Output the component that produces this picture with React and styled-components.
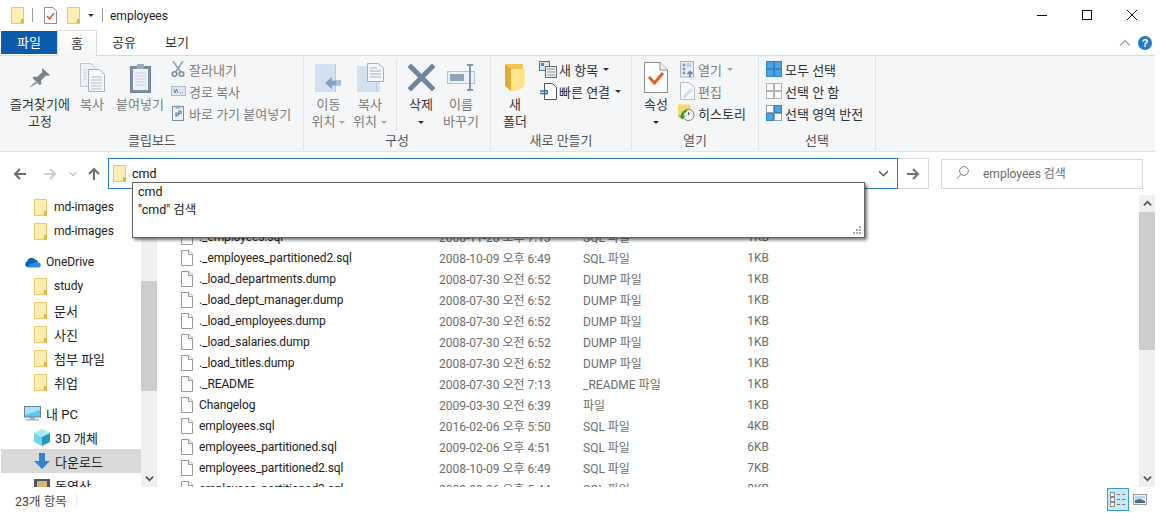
import React from "react";
import styled, { createGlobalStyle } from "styled-components";

const Global = createGlobalStyle`
  html, body { margin: 0; padding: 0; background: #fff; }
  body { font-family: Roboto, "Noto Sans CJK KR", sans-serif; font-size: 12px; color: #222; }
  * { box-sizing: border-box; }
`;

const Page = styled.div`
  position: relative; width: 1155px; height: 513px; overflow: hidden; background: #fff;
  display: flex; flex-direction: column;
`;
const TitleBar = styled.div`height: 30px; display: flex; align-items: center; padding-left: 11px; flex: none;`;
const QuickSep = styled.span`width: 1px; height: 14px; background: #9a9a9a; margin: 0 ${p => p.$r}px 0 ${p => p.$l}px;`;
const QuickGap = styled.span`width: 10px; flex: none;`;
const TitleText = styled.span`font-size: 12px; color: #222; margin-left: 7px; padding-top: 2px;`;
const WinControls = styled.div`margin-left: auto; display: flex; align-items: center; margin-right: 18px; gap: 35px;`;
const TabRow = styled.div`height: 25px; display: flex; align-items: stretch; padding-left: 1px; flex: none; position: relative; z-index: 1; font-size: 13px;`;
const FileTab = styled.div`
  width: 56px; height: 23px; margin-top: 1px; background: #0a5bab; color: #fff; display: flex; align-items: center; justify-content: center; padding-bottom: 2px;
`;
const Tab = styled.div`
  width: ${p => p.$w}px; display: flex; align-items: center; justify-content: center; color: #333;
  ${p => p.$active ? "border:1px solid #dadbdc;border-bottom:none;background:linear-gradient(#fff,#f5f6f7);height:26px;padding-bottom:3px;" : "padding-bottom: 3px;"}
`;
const HelpArea = styled.div`margin-left: auto; display: flex; align-items: center; gap: 7px; margin-right: 3px;`;

const Ribbon = styled.div`
  height: 97px; flex: none; background: #f5f6f7; border-top: 1px solid #dadbdc; border-bottom: 1px solid #e4e4e4; display: flex; padding-left: 1px;
  font-size: 13px;
`;
const Group = styled.div`
  width: ${p => p.$w}px; flex: none; border-right: 1px solid #e2e3e4; display: flex; flex-direction: column; margin-bottom: 1px;
`;
const GroupBody = styled.div`flex: none; height: 76px; display: flex; padding: 3px 0 0 ${p => p.$pl || 0}px;`;
const GroupLabel = styled.div`text-align: center; color: #555; line-height: 18px; height: 18px;`;
const Large = styled.div`
  width: ${p => p.$w}px; flex: none; display: flex; flex-direction: column; align-items: center; text-align: center;
  color: ${p => p.$off ? "#7c7c7c" : "#333"}; white-space: nowrap;
`;
const LargeIcon = styled.div`height: 37px; display: flex; align-items: center; justify-content: center; flex: none;`;
const LargeText = styled.div`line-height: 17px;`;
const SmallCol = styled.div`display: flex; flex-direction: column; margin-left: ${p => p.$ml || 0}px; margin-top: -1px;`;
const Small = styled.div`
  height: 22px; display: flex; align-items: center; gap: 1px; white-space: nowrap; color: ${p => p.$off ? "#7c7c7c" : "#333"};
`;
const SmallIcon = styled.span`width: 18px; height: 18px; display: flex; align-items: center; justify-content: center; flex: none; margin-right: 1px;`;
const Caret = styled.span`
  display: inline-block; width: 0; height: 0; border-left: 3px solid transparent; border-right: 3px solid transparent;
  border-top: 3px solid ${p => p.$off ? "#a6a6a6" : "#333"}; margin-left: ${p => p.$ml ?? 4}px; vertical-align: middle;
`;
const VSep = styled.span`width: 1px; height: 72px; background: #e2e3e4; margin: 0 4px 0 5px; flex: none;`;

const NavBar = styled.div`height: 43px; flex: none; display: flex; align-items: center; position: relative;`;
const NavButtons = styled.div`width: 108px; display: flex; align-items: center; padding-left: 13px; flex: none;`;
const NavIcon = styled.span`display: flex; width: ${p => p.$w}px; justify-content: center; margin-left: ${p => p.$ml || 0}px;`;
const Address = styled.div`
  width: 790px; height: 31px; border: 1px solid #2b7cb3; display: flex; align-items: center; padding-left: 4px; background: #fff; flex: none;
`;
const AddressText = styled.span`margin-left: 6px; color: #111; font-size: 12.5px;`;
const AddressChevron = styled.span`margin-left: auto; margin-right: 8px; display: flex;`;
const GoButton = styled.div`
  width: 31px; height: 31px; border: 1px solid #d9d9d9; border-left: none; display: flex; align-items: center; justify-content: center; flex: none;
`;
const SearchBox = styled.div`
  width: 202px; height: 30px; margin-left: 12px; border: 1px solid #d9d9d9; display: flex; align-items: center; padding: 0 0 2px 14px; gap: 14px; color: #6d6d6d; flex: none;
`;

const Popup = styled.div`
  position: absolute; left: 132px; top: 182px; width: 733px; height: 56px; background: #fff; border: 1px solid #646464;
  box-shadow: 2px 2px 3px rgba(0,0,0,.55); padding: 0 5px; z-index: 5; line-height: 18px; color: #222; font-size: 12.5px;
`;
const PopupGrip = styled.span`position: absolute; right: 2px; bottom: 2px; display: flex;`;

const Main = styled.div`flex: none; height: 292px; display: flex; overflow: hidden;`;
const Tree = styled.div`width: 141px; flex: none; padding-left: 1px; overflow: hidden;`;
const TreeRow = styled.div`
  height: 24px; display: flex; align-items: center; gap: ${p => p.$gap || 7}px; padding-left: ${p => p.$pl}px; color: #222;
  margin-top: ${p => p.$mt || 0}px; white-space: nowrap; font-size: ${p => p.$ko ? 13 : 12}px;
  ${p => p.$sel ? "background:#d9d9d9;" : ""}
`;
const ScrollBar = styled.div`
  width: 16px; flex: none; background: #f0f0f0; display: flex; flex-direction: column; align-items: center;
`;
const ScrollBtn = styled.span`height: 17px; flex: none; display: flex; align-items: center; justify-content: center;`;
const ScrollSpace = styled.span`flex: ${p => p.$grow || 1} 0 0;`;
const Thumb = styled.span`width: 16px; height: ${p => p.$h}px; background: #cdcdcd; flex: none;`;
const List = styled.div`flex: 1; overflow: hidden; padding: 31px 0 0 24px;`;
const Row = styled.div`height: 21px; display: grid; grid-template-columns: 18px 240px 144px 100px 86px; align-items: center; white-space: nowrap;`;
const RowIcon = styled.span`display: flex; align-items: center;`;
const Name = styled.span`color: #222; letter-spacing: -0.1px;`;
const Meta = styled.span`color: #6d6d6d;`;
const Size = styled(Meta)`text-align: right;`;

const Status = styled.div`height: 26px; flex: none; display: flex; align-items: center; padding-left: 15px; color: #444; position: relative; font-size: 12.5px;`;
const StatusSep = styled.span`width: 1px; height: 14px; background: #ededed; margin-left: 9px;`;
const ViewSwitch = styled.div`margin-left: auto; display: flex; align-items: center; gap: 4px; margin-right: 8px; margin-top: -2px;`;
const ViewActive = styled.div`
  width: 22px; height: 23px; background: #cce8fa; border: 1px solid #3b9dc9; display: flex; align-items: center; justify-content: center;
`;

/* ---------- drawings ---------- */
const Folder = ({ w = 13, h = 17 }) => (
  <svg width={w} height={h} viewBox="0 0 13 17">
    <path d="M0.5 0.5H12.5V16.5H0.5Z" fill="#fde38c" stroke="#ecc964" />
    <path d="M1 1H12V9C12 12 9 15 6 16H1Z" fill="#ffeeb3" />
    <path d="M10 12H12.5V16.5H10Z" fill="#e5b63f" />
  </svg>
);
const FileDoc = () => (
  <svg width="12" height="16" viewBox="0 0 12 16">
    <path d="M.5.5H8L11.5 4V15.5H.5Z" fill="#fff" stroke="#9a9a9a" />
    <path d="M7.5.5V4.5H11.5" fill="#f5f5f5" stroke="#9a9a9a" />
  </svg>
);
const CheckDoc = () => (
  <svg width="13" height="17" viewBox="0 0 13 17">
    <path d="M.5.5H9L12.5 4V16.5H.5Z" fill="#fff" stroke="#8e8e8e" />
    <path d="M3 9L5.5 12L10 6" fill="none" stroke="#e0582a" strokeWidth="1.5" />
  </svg>
);
const Pin = () => (
  <svg width="24" height="22" viewBox="0 0 24 22">
    <path d="M14 1L22 8L20 9L18 8.5L13 13.5L13.5 17L11.5 18L4.5 11L6 9.5L9 10L14.5 5L14 3Z" fill="#7e8186" />
    <path d="M7.5 14.5L1 21L9 16.5Z" fill="#8d9095" />
  </svg>
);
const CopyDocs = () => (
  <svg width="25" height="29" viewBox="0 0 25 29">
    <path d="M.5.5H11L16 5.5V23.5H.5Z" fill="#eef1f7" stroke="#bfc6d2" />
    <path d="M8.5 6.5H19L24.5 11.5V28.5H8.5Z" fill="#f7f8fb" stroke="#a9b1bf" />
    <path d="M11 14H22M11 17H22M11 20H22M11 23H22M11 26H22" stroke="#b4bac6" />
    <path d="M3 7H7M3 10H7M3 13H7M3 16H7" stroke="#cbd0da" />
  </svg>
);
const Clipboard = () => (
  <svg width="21" height="30" viewBox="0 0 21 30">
    <rect x=".5" y="3.5" width="20" height="26" fill="#7d90a8" stroke="#6f8199" />
    <rect x="3" y="6" width="15" height="21" fill="#eff0f6" />
    <path d="M5 10H16M5 13H16M5 16H16M5 19H16M5 22H16" stroke="#cdd2df" />
    <rect x="7" y="1" width="7" height="5" fill="#9aa9bc" />
  </svg>
);
const Scissors = () => (
  <svg width="14" height="16" viewBox="0 0 14 16" fill="none">
    <path d="M2 0L9.5 11M12 0L4.5 11" stroke="#9aa0a8" strokeWidth="1.6" />
    <circle cx="3.5" cy="13" r="2.3" stroke="#7d8fa6" strokeWidth="1.6" />
    <circle cx="10.5" cy="13" r="2.3" stroke="#7d8fa6" strokeWidth="1.6" />
  </svg>
);
const PathIcon = () => (
  <svg width="15" height="10" viewBox="0 0 15 10">
    <rect x=".5" y=".5" width="14" height="9" fill="#dde6f2" stroke="#a9bdd6" />
    <path d="M2.5 3L4 7L5.5 3L7 7M9 7H10M11 7H12" stroke="#5a6a80" strokeWidth=".8" fill="none" />
  </svg>
);
const Shortcut = () => (
  <svg width="12" height="16" viewBox="0 0 12 16">
    <rect x=".5" y="1.5" width="11" height="14" fill="#eef2f7" stroke="#7d90a8" />
    <rect x="3.5" y=".5" width="5" height="3" fill="#9aa9bc" />
    <path d="M4 12V8H8M8 8L5 11M6 6H9V9" stroke="#5f7590" strokeWidth="1.1" fill="none" />
  </svg>
);
const MoveTo = () => (
  <svg width="27" height="28" viewBox="0 0 27 28">
    <rect x="0" y="0" width="21" height="28" fill="#d3e0f0" />
    <rect x="20" y="0" width="1" height="28" fill="#b9cbe0" />
    <path d="M10 19L17 13V16.5H26V21.5H17V25Z" fill="#85a3c4" />
    <rect x="21" y="16.5" width="5" height="5" fill="#a9bed6" />
  </svg>
);
const CopyTo = () => (
  <svg width="27" height="30" viewBox="0 0 27 30">
    <rect x="0" y="3" width="23" height="26" fill="#d3e0f0" />
    <rect x="19" y="3" width="1" height="26" fill="#b9cbe0" />
    <path d="M10.5.5H21L26.5 5V18.5H10.5Z" fill="#f4f6fa" stroke="#a6afbe" />
    <path d="M13 5H20M13 8H24M13 11H24M13 14H24" stroke="#a6afbe" />
  </svg>
);
const Cross = () => (
  <svg width="27" height="27" viewBox="0 0 27 27">
    <path d="M3 3L24 24M24 3L3 24" stroke="#71869f" strokeWidth="5" strokeLinecap="square" />
  </svg>
);
const Rename = () => (
  <svg width="29" height="27" viewBox="0 0 29 27" fill="none">
    <rect x=".5" y="7.5" width="27" height="12" fill="#eef2f8" stroke="#b4c3d6" />
    <rect x="3" y="10" width="14" height="7" fill="#8fa3bb" />
    <path d="M20 1H26M20 26H26M23 1V26" stroke="#8396ae" strokeWidth="2" />
  </svg>
);
const NewFolder = () => (
  <svg width="21" height="29" viewBox="0 0 21 29">
    <path d="M1 1H18V24H6Z" fill="#f0c755" />
    <path d="M0 1L6 6V28L0 23Z" fill="#e0ab3a" />
    <path d="M6 6H20V22C18 26 12 28 6 28Z" fill="#ffe58e" />
  </svg>
);
const NewItem = () => (
  <svg width="18" height="17" viewBox="0 0 18 17">
    <rect x=".5" y=".5" width="10" height="9" fill="#dbe6f2" stroke="#52718f" />
    <rect x="2" y="2" width="3" height="3" fill="#3d87c8" />
    <rect x="6.5" y="5.5" width="11" height="11" fill="#f3f3f3" stroke="#6a6a6a" />
    <path d="M8 8H16M8 11H16M8 14H16" stroke="#8a8a8a" />
  </svg>
);
const QuickLink = () => (
  <svg width="17" height="17" viewBox="0 0 17 17">
    <path d="M4.5.5H12L16.5 4V16.5H4.5Z" fill="#fff" stroke="#555" />
    <path d="M0 8H8M0 10.5H8" stroke="#2479bd" strokeWidth="1.3" />
    <path d="M4 6L8 9.2L4 12.5" fill="none" stroke="#2479bd" />
  </svg>
);
const PropertyDoc = () => (
  <svg width="24" height="31" viewBox="0 0 24 31">
    <path d="M.5.5H16L23.5 8V30.5H.5Z" fill="#fff" stroke="#8d8d8d" />
    <path d="M16 .5V8H23.5" fill="#f0f0f0" stroke="#8d8d8d" />
    <path d="M5 15L10.5 21L19 11" fill="none" stroke="#e0602b" strokeWidth="3" />
  </svg>
);
const OpenIcon = () => (
  <svg width="15" height="17" viewBox="0 0 15 17">
    <rect x=".5" y=".5" width="13" height="15.5" fill="#e7ecf3" stroke="#a8b4c3" />
    <path d="M3 3H5V5H3ZM3 7H5V9H3ZM3 11H5V13H3ZM7 3H11M7 5H11" fill="#8ea0b6" stroke="#8ea0b6" strokeWidth=".8" />
    <path d="M10 16V11M7.5 13L10 10.5L12.5 13" stroke="#5f86b5" strokeWidth="1.6" fill="none" />
  </svg>
);
const EditIcon = () => (
  <svg width="15" height="18" viewBox="0 0 15 18">
    <path d="M.5.5H9L14.5 5V17.5H.5Z" fill="#f7f9fc" stroke="#b3bdca" />
    <path d="M3 14L11 6L13 8L5 16H3Z" fill="#d2deec" />
  </svg>
);
const HistoryIcon = () => (
  <svg width="19" height="18" viewBox="0 0 19 18">
    <path d="M0 0H13V14H0Z" fill="#f8d56f" />
    <circle cx="11" cy="11" r="6" fill="#f4f4f4" stroke="#6f7f6f" />
    <path d="M11 8V11L13 9" stroke="#555" fill="none" />
    <path d="M3 12A6 6 0 0 1 10 6L9 8A4 4 0 0 0 6 12L8 12L4.5 16L1 12Z" fill="#3c9b2f" />
  </svg>
);
const SelectGrid = ({ mode }) => {
  const c = (i) => {
    if (mode === "all") return { f: "#4da3e0", s: "#2f86c8" };
    if (mode === "none") return { f: "#fff", s: "#b4b4b4" };
    return i === 1 || i === 2 ? { f: "#4da3e0", s: "#2f86c8" } : { f: "#fff", s: "#8aa4bc" };
  };
  const pos = [[.5, .5], [8.5, .5], [.5, 8.5], [8.5, 8.5]];
  return (
    <svg width="16" height="16" viewBox="0 0 16 16">
      {pos.map(([x, y], i) => <rect key={i} x={x} y={y} width="7" height="7" fill={c(i).f} stroke={c(i).s} />)}
    </svg>
  );
};
const Arrow = ({ dir, color }) => (
  <svg width="14" height="14" viewBox="0 0 14 14" fill="none" stroke={color} strokeWidth="2">
    {dir === "left" && <path d="M13 7H2M7 2L2 7L7 12" />}
    {dir === "right" && <path d="M1 7H12M7 2L12 7L7 12" />}
    {dir === "up" && <path d="M7 13V2M2 7L7 2L12 7" />}
  </svg>
);
const Chevron = ({ up, size = 9, color = "#555", sw = 1.2 }) => (
  <svg width={size} height={size} viewBox="0 0 10 10" fill="none" stroke={color} strokeWidth={sw}>
    <path d={up ? "M1 7L5 3L9 7" : "M1 3L5 7L9 3"} />
  </svg>
);
const Magnifier = () => (
  <svg width="13" height="13" viewBox="0 0 13 13" fill="none" stroke="#858585">
    <circle cx="8" cy="5" r="4.4" />
    <path d="M5 8.5L.7 12.6" />
  </svg>
);
const Grip = () => (
  <svg width="9" height="9" viewBox="0 0 9 9" fill="#a8a8a8">
    <path d="M6 0h2v2H6zM3 3h2v2H3zM6 3h2v2H6zM0 6h2v2H0zM3 6h2v2H3zM6 6h2v2H6z" />
  </svg>
);
const Cloud = () => (
  <svg width="17" height="12" viewBox="0 0 17 12">
    <path d="M3 11A3 3 0 0 1 3 5.5A4.5 4.5 0 0 1 11 3.5A3.5 3.5 0 0 1 14 7L7 11Z" fill="#0a64b4" />
    <path d="M3 11.5H14.5A2.5 2.5 0 0 0 14 6.5C12 6 10 6.5 8 8C6 7.5 4 9 3 11.5Z" fill="#2a8ee0" />
  </svg>
);
const Monitor = () => (
  <svg width="17" height="15" viewBox="0 0 17 15">
    <rect x=".5" y=".5" width="16" height="10.5" fill="#5cc3f2" stroke="#6f8092" />
    <path d="M1 1H16V4L1 9Z" fill="#a7e2fb" />
    <rect x="6" y="11" width="5" height="2" fill="#9aa7b3" />
    <rect x="2" y="13" width="13" height="1.5" fill="#aab4bd" />
  </svg>
);
const Cube = () => (
  <svg width="16" height="17" viewBox="0 0 16 17">
    <path d="M8 0L16 4L8 8L0 4Z" fill="#a5ecf7" />
    <path d="M0 4L8 8V17L0 13Z" fill="#6fd6ea" />
    <path d="M16 4L8 8V17L16 13Z" fill="#1e9cc0" />
  </svg>
);
const DownArrow = () => (
  <svg width="16" height="16" viewBox="0 0 16 16">
    <path d="M5 0H11V8H16L8 16L0 8H5Z" fill="#2f84d6" />
  </svg>
);
const Film = () => (
  <svg width="16" height="12" viewBox="0 0 16 12">
    <rect width="16" height="12" fill="#4a5568" />
    <rect x="3" y="2" width="10" height="8" fill="#d6b66a" />
  </svg>
);
const Help = () => (
  <svg width="14" height="14" viewBox="0 0 14 14">
    <circle cx="7" cy="7" r="7" fill="#2a78c8" />
    <text x="7" y="11" textAnchor="middle" fontSize="11" fontWeight="700" fill="#fff" fontFamily="Liberation Sans, sans-serif">?</text>
  </svg>
);
const DetailsView = () => (
  <svg width="16" height="15" viewBox="0 0 16 15" fill="none">
    <rect x=".5" y=".5" width="4" height="4" fill="#fff" stroke="#8a8a8a" />
    <rect x=".5" y="5.5" width="4" height="4" fill="#fff" stroke="#8a8a8a" />
    <rect x=".5" y="10.5" width="4" height="4" fill="#fff" stroke="#8a8a8a" />
    <path d="M7 2.5H10M12 2.5H15M7 7.5H10M12 7.5H15M7 12.5H10M12 12.5H15" stroke="#777" />
  </svg>
);
const ThumbView = () => (
  <svg width="14" height="11" viewBox="0 0 14 11">
    <rect x=".5" y=".5" width="13" height="10" fill="#e8f0f5" stroke="#9a9a9a" />
    <rect x="2" y="2" width="10" height="3" fill="#bcd6e6" />
    <path d="M2 9V6L7 5L12 7V9Z" fill="#3f6f80" />
  </svg>
);

const files = [
  ["._employees.sql", "2008-11-28 오후 7:13", "SQL 파일", "1KB"],
  ["._employees_partitioned2.sql", "2008-10-09 오후 6:49", "SQL 파일", "1KB"],
  ["._load_departments.dump", "2008-07-30 오전 6:52", "DUMP 파일", "1KB"],
  ["._load_dept_manager.dump", "2008-07-30 오전 6:52", "DUMP 파일", "1KB"],
  ["._load_employees.dump", "2008-07-30 오전 6:52", "DUMP 파일", "1KB"],
  ["._load_salaries.dump", "2008-07-30 오전 6:52", "DUMP 파일", "1KB"],
  ["._load_titles.dump", "2008-07-30 오전 6:52", "DUMP 파일", "1KB"],
  ["._README", "2008-07-30 오전 7:13", "_README 파일", "1KB"],
  ["Changelog", "2009-03-30 오전 6:39", "파일", "1KB"],
  ["employees.sql", "2016-02-06 오후 5:50", "SQL 파일", "4KB"],
  ["employees_partitioned.sql", "2009-02-06 오후 4:51", "SQL 파일", "6KB"],
  ["employees_partitioned2.sql", "2008-10-09 오후 6:49", "SQL 파일", "7KB"],
  ["employees_partitioned3.sql", "2009-02-06 오후 5:44", "SQL 파일", "8KB"],
];

export default function App() {
  return (
    <Page>
      <Global />
      <TitleBar>
        <Folder />
        <QuickSep $l={8} $r={11} />
        <CheckDoc />
        <QuickGap />
        <Folder />
        <Caret $ml={8} />
        <QuickSep $l={8} $r={0} />
        <TitleText>employees</TitleText>
        <WinControls>
          <svg width="10" height="10" viewBox="0 0 10 10"><path d="M0 5.5H10" stroke="#111" /></svg>
          <svg width="10" height="10" viewBox="0 0 10 10"><rect x=".5" y=".5" width="9" height="9" fill="none" stroke="#111" /></svg>
          <svg width="10" height="10" viewBox="0 0 10 10"><path d="M0 0L10 10M10 0L0 10" stroke="#111" /></svg>
        </WinControls>
      </TitleBar>

      <TabRow>
        <FileTab>파일</FileTab>
        <Tab $w={40} $active>홈</Tab>
        <Tab $w={54}>공유</Tab>
        <Tab $w={52}>보기</Tab>
        <HelpArea>
          <Chevron up size={12} color="#a8a8a8" />
          <Help />
        </HelpArea>
      </TabRow>

      <Ribbon>
        <Group $w={303}>
          <GroupBody $pl={8}>
            <Large $w={62}><LargeIcon><Pin /></LargeIcon><LargeText>즐겨찾기에<br />고정</LargeText></Large>
            <Large $w={42} $off><LargeIcon><CopyDocs /></LargeIcon><LargeText>복사</LargeText></Large>
            <Large $w={54} $off><LargeIcon><Clipboard /></LargeIcon><LargeText>붙여넣기</LargeText></Large>
            <SmallCol $ml={2}>
              <Small $off><SmallIcon><Scissors /></SmallIcon>잘라내기</Small>
              <Small $off><SmallIcon><PathIcon /></SmallIcon>경로 복사</Small>
              <Small $off><SmallIcon><Shortcut /></SmallIcon>바로 가기 붙여넣기</Small>
            </SmallCol>
          </GroupBody>
          <GroupLabel>클립보드</GroupLabel>
        </Group>
        <Group $w={187}>
          <GroupBody $pl={4}>
            <Large $w={41} $off><LargeIcon><MoveTo /></LargeIcon><LargeText>이동<br />위치<Caret $off /></LargeText></Large>
            <Large $w={42} $off><LargeIcon><CopyTo /></LargeIcon><LargeText>복사<br />위치<Caret $off /></LargeText></Large>
            <VSep />
            <Large $w={40}><LargeIcon><Cross /></LargeIcon><LargeText>삭제<br /><Caret $ml={0} /></LargeText></Large>
            <Large $w={40} $off><LargeIcon><Rename /></LargeIcon><LargeText>이름<br />바꾸기</LargeText></Large>
          </GroupBody>
          <GroupLabel>구성</GroupLabel>
        </Group>
        <Group $w={141}>
          <GroupBody $pl={4}>
            <Large $w={40}><LargeIcon><NewFolder /></LargeIcon><LargeText>새<br />폴더</LargeText></Large>
            <SmallCol $ml={4}>
              <Small><SmallIcon><NewItem /></SmallIcon>새 항목<Caret /></Small>
              <Small><SmallIcon><QuickLink /></SmallIcon>빠른 연결<Caret /></Small>
            </SmallCol>
          </GroupBody>
          <GroupLabel>새로 만들기</GroupLabel>
        </Group>
        <Group $w={127}>
          <GroupBody $pl={4}>
            <Large $w={40}><LargeIcon><PropertyDoc /></LargeIcon><LargeText>속성<br /><Caret $ml={0} /></LargeText></Large>
            <SmallCol $ml={2}>
              <Small $off><SmallIcon><OpenIcon /></SmallIcon>열기<Caret $off /></Small>
              <Small $off><SmallIcon><EditIcon /></SmallIcon>편집</Small>
              <Small><SmallIcon><HistoryIcon /></SmallIcon>히스토리</Small>
            </SmallCol>
          </GroupBody>
          <GroupLabel>열기</GroupLabel>
        </Group>
        <Group $w={117}>
          <GroupBody $pl={6}>
            <SmallCol>
              <Small><SmallIcon><SelectGrid mode="all" /></SmallIcon>모두 선택</Small>
              <Small><SmallIcon><SelectGrid mode="none" /></SmallIcon>선택 안 함</Small>
              <Small><SmallIcon><SelectGrid mode="inv" /></SmallIcon>선택 영역 반전</Small>
            </SmallCol>
          </GroupBody>
          <GroupLabel>선택</GroupLabel>
        </Group>
      </Ribbon>

      <NavBar>
        <NavButtons>
          <NavIcon $w={14}><Arrow dir="left" color="#6d6d6d" /></NavIcon>
          <NavIcon $w={16} $ml={15}><Arrow dir="right" color="#d0d0d0" /></NavIcon>
          <NavIcon $w={9} $ml={10}><Chevron size={8} color="#8a8a8a" /></NavIcon>
          <NavIcon $w={14} $ml={10}><Arrow dir="up" color="#6d6d6d" /></NavIcon>
        </NavButtons>
        <Address>
          <Folder />
          <AddressText>cmd</AddressText>
          <AddressChevron><Chevron size={11} color="#555" /></AddressChevron>
        </Address>
        <GoButton><Arrow dir="right" color="#707070" /></GoButton>
        <SearchBox><Magnifier />employees 검색</SearchBox>
      </NavBar>

      <Main>
        <Tree>
          <TreeRow $pl={33}><Folder />md-images</TreeRow>
          <TreeRow $pl={33}><Folder />md-images</TreeRow>
          <TreeRow $pl={23} $gap={5} $mt={7}><Cloud />OneDrive</TreeRow>
          <TreeRow $pl={33}><Folder />study</TreeRow>
          <TreeRow $pl={33} $ko><Folder />문서</TreeRow>
          <TreeRow $pl={33} $ko><Folder />사진</TreeRow>
          <TreeRow $pl={33} $ko><Folder />첨부 파일</TreeRow>
          <TreeRow $pl={33} $ko><Folder />취업</TreeRow>
          <TreeRow $pl={23} $gap={5} $mt={7} $ko><Monitor />내 PC</TreeRow>
          <TreeRow $pl={33} $gap={5} $ko><Cube />3D 개체</TreeRow>
          <TreeRow $pl={33} $gap={5} $sel $ko><DownArrow />다운로드</TreeRow>
          <TreeRow $pl={33} $gap={5} $ko><Film />동영상</TreeRow>
        </Tree>
        <ScrollBar>
          <ScrollSpace $grow={86} />
          <Thumb $h={110} />
          <ScrollSpace $grow={79} />
          <ScrollBtn><Chevron size={9} color="#555" sw={2} /></ScrollBtn>
        </ScrollBar>
        <List>
          {files.map(f => (
            <Row key={f[0]}>
              <RowIcon><FileDoc /></RowIcon>
              <Name>{f[0]}</Name>
              <Meta>{f[1]}</Meta>
              <Meta>{f[2]}</Meta>
              <Size>{f[3]}</Size>
            </Row>
          ))}
        </List>
        <ScrollBar>
          <ScrollBtn><Chevron up size={9} color="#555" sw={2} /></ScrollBtn>
          <Thumb $h={138} />
          <ScrollSpace />
          <ScrollBtn><Chevron size={9} color="#555" sw={2} /></ScrollBtn>
        </ScrollBar>
      </Main>

      <Status>
        23개 항목<StatusSep />
        <ViewSwitch>
          <ViewActive><DetailsView /></ViewActive>
          <ThumbView />
        </ViewSwitch>
      </Status>

      <Popup>
        <div>cmd</div>
        <div>"cmd" 검색</div>
        <PopupGrip><Grip /></PopupGrip>
      </Popup>
    </Page>
  );
}
